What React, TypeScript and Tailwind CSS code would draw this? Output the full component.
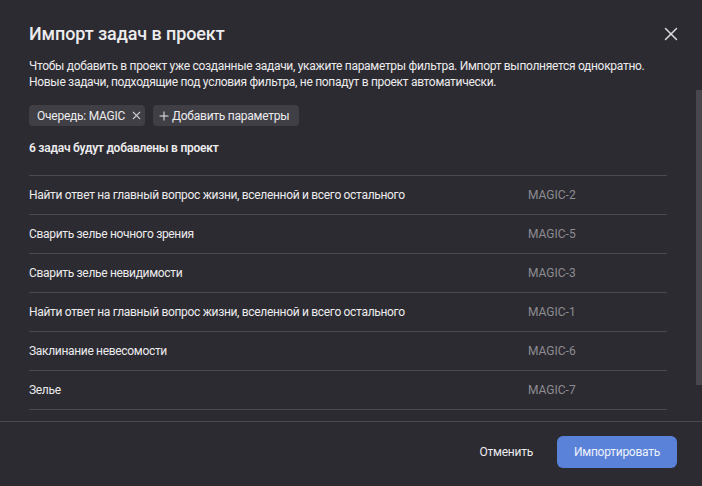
import { X, Plus } from "lucide-react";

const tasks = [
  { title: "Найти ответ на главный вопрос жизни, вселенной и всего остального", key: "MAGIC-2" },
  { title: "Сварить зелье ночного зрения", key: "MAGIC-5" },
  { title: "Сварить зелье невидимости", key: "MAGIC-3" },
  { title: "Найти ответ на главный вопрос жизни, вселенной и всего остального", key: "MAGIC-1" },
  { title: "Заклинание невесомости", key: "MAGIC-6" },
  { title: "Зелье", key: "MAGIC-7" },
];

export default function App() {
  return (
    <div
      className="relative w-[702px] h-[486px] bg-[#2c2b31] text-[#ececee] flex flex-col overflow-hidden tracking-[-0.25px]"
      style={{ fontFamily: "Roboto, 'Noto Sans', sans-serif" }}
    >
      {/* Body */}
      <div className="flex-1 flex flex-col pl-[29px] pr-[35px] pt-[22px]">
        <div className="flex items-start justify-between">
          <h1 className="text-[18px] leading-6 font-medium tracking-[-0.1px]">
            Импорт задач в проект
          </h1>
          <button className="mt-[1px] mr-[-15px] text-[#dcdcde]">
            <X size={22} strokeWidth={1.6} />
          </button>
        </div>
        <p className="mt-3 text-[12px] leading-4 whitespace-nowrap tracking-[-0.3px]">
          Чтобы добавить в проект уже созданные задачи, укажите параметры фильтра. Импорт выполняется однократно.
          <br />
          Новые задачи, подходящие под условия фильтра, не попадут в проект автоматически.
        </p>
        <div className="mt-[15px] flex gap-2 whitespace-nowrap text-[12px]">
          <div className="h-[21px] flex items-center gap-[5px] pl-2 pr-[2px] rounded bg-[#403f45]">
            <span>Очередь: MAGIC</span>
            <X size={13} strokeWidth={2} className="shrink-0 text-[#c9c9cc]" />
          </div>
          <div className="h-[21px] flex items-center gap-[1px] pl-1 pr-[10px] rounded bg-[#403f45]">
            <Plus size={14} strokeWidth={1.7} className="shrink-0" />
            <span>Добавить параметры</span>
          </div>
        </div>
        <div className="mt-[14px] text-[12px] leading-4 font-semibold">
          6 задач будут добавлены в проект
        </div>
        <div className="mt-[19px] border-t border-[#4a494f]">
          {tasks.map((t, i) => (
            <div
              key={i}
              className="h-[39px] flex items-center border-b border-[#4a494f] text-[12px] whitespace-nowrap"
            >
              <span className="w-[499px] tracking-[-0.32px]">{t.title}</span>
              <span className="text-[#8d8c92] tracking-normal">{t.key}</span>
            </div>
          ))}
        </div>
      </div>

      {/* Scrollbar thumb */}
      <div className="absolute right-0 top-[90px] w-[6px] h-[295px] bg-[#48474d]" />

      {/* Footer */}
      <div className="border-t border-[#4a494f] h-[65px] flex items-start justify-end gap-6 pt-[14px] pr-[25px] text-[12px]">
        <button className="h-8 text-[#ececee]">Отменить</button>
        <button className="h-8 w-[120px] rounded-md bg-[#5a82d9] text-[#eef2fb]">
          Импортировать
        </button>
      </div>
    </div>
  );
}
